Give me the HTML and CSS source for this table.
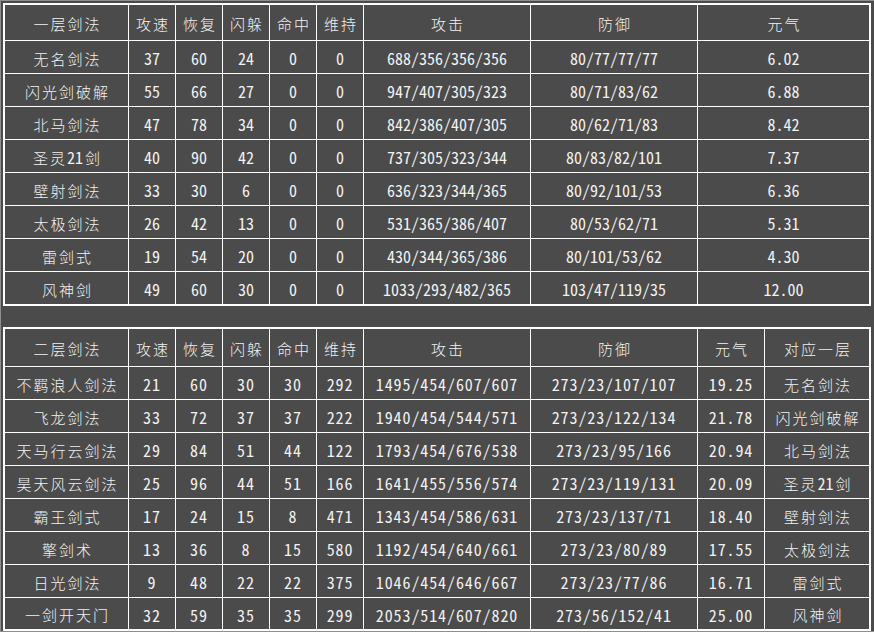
FILE: index.html
```html
<!DOCTYPE html>
<html lang="zh">
<head>
<meta charset="utf-8">
<link rel="stylesheet" href="styles.css">
</head>
<body>
<div class="frame">
  <div class="grid t1">
    <div class="cell h">一层剑法</div><div class="cell h">攻速</div><div class="cell h">恢复</div><div class="cell h">闪躲</div><div class="cell h">命中</div><div class="cell h">维持</div><div class="cell h">攻击</div><div class="cell h">防御</div><div class="cell h">元气</div>

    <div class="cell h">无名剑法</div><div class="cell n">37</div><div class="cell n">60</div><div class="cell n">24</div><div class="cell n">0</div><div class="cell n">0</div><div class="cell n">688/356/356/356</div><div class="cell n">80/77/77/77</div><div class="cell n">6.02</div>
    <div class="cell h">闪光剑破解</div><div class="cell n">55</div><div class="cell n">66</div><div class="cell n">27</div><div class="cell n">0</div><div class="cell n">0</div><div class="cell n">947/407/305/323</div><div class="cell n">80/71/83/62</div><div class="cell n">6.88</div>
    <div class="cell h">北马剑法</div><div class="cell n">47</div><div class="cell n">78</div><div class="cell n">34</div><div class="cell n">0</div><div class="cell n">0</div><div class="cell n">842/386/407/305</div><div class="cell n">80/62/71/83</div><div class="cell n">8.42</div>
    <div class="cell h">圣灵<span class="d">21</span>剑</div><div class="cell n">40</div><div class="cell n">90</div><div class="cell n">42</div><div class="cell n">0</div><div class="cell n">0</div><div class="cell n">737/305/323/344</div><div class="cell n">80/83/82/101</div><div class="cell n">7.37</div>
    <div class="cell h">壁射剑法</div><div class="cell n">33</div><div class="cell n">30</div><div class="cell n">6</div><div class="cell n">0</div><div class="cell n">0</div><div class="cell n">636/323/344/365</div><div class="cell n">80/92/101/53</div><div class="cell n">6.36</div>
    <div class="cell h">太极剑法</div><div class="cell n">26</div><div class="cell n">42</div><div class="cell n">13</div><div class="cell n">0</div><div class="cell n">0</div><div class="cell n">531/365/386/407</div><div class="cell n">80/53/62/71</div><div class="cell n">5.31</div>
    <div class="cell h">雷剑式</div><div class="cell n">19</div><div class="cell n">54</div><div class="cell n">20</div><div class="cell n">0</div><div class="cell n">0</div><div class="cell n">430/344/365/386</div><div class="cell n">80/101/53/62</div><div class="cell n">4.30</div>
    <div class="cell h">风神剑</div><div class="cell n">49</div><div class="cell n">60</div><div class="cell n">30</div><div class="cell n">0</div><div class="cell n">0</div><div class="cell n">1033/293/482/365</div><div class="cell n">103/47/119/35</div><div class="cell n">12.00</div>
  </div>

  <div class="grid t2">
    <div class="cell h">二层剑法</div><div class="cell h">攻速</div><div class="cell h">恢复</div><div class="cell h">闪躲</div><div class="cell h">命中</div><div class="cell h">维持</div><div class="cell h">攻击</div><div class="cell h">防御</div><div class="cell h">元气</div><div class="cell h">对应一层</div>

    <div class="cell h">不羁浪人剑法</div><div class="cell n">21</div><div class="cell n">60</div><div class="cell n">30</div><div class="cell n">30</div><div class="cell n">292</div><div class="cell n">1495/454/607/607</div><div class="cell n">273/23/107/107</div><div class="cell n">19.25</div><div class="cell h">无名剑法</div>
    <div class="cell h">飞龙剑法</div><div class="cell n">33</div><div class="cell n">72</div><div class="cell n">37</div><div class="cell n">37</div><div class="cell n">222</div><div class="cell n">1940/454/544/571</div><div class="cell n">273/23/122/134</div><div class="cell n">21.78</div><div class="cell h">闪光剑破解</div>
    <div class="cell h">天马行云剑法</div><div class="cell n">29</div><div class="cell n">84</div><div class="cell n">51</div><div class="cell n">44</div><div class="cell n">122</div><div class="cell n">1793/454/676/538</div><div class="cell n">273/23/95/166</div><div class="cell n">20.94</div><div class="cell h">北马剑法</div>
    <div class="cell h">昊天风云剑法</div><div class="cell n">25</div><div class="cell n">96</div><div class="cell n">44</div><div class="cell n">51</div><div class="cell n">166</div><div class="cell n">1641/455/556/574</div><div class="cell n">273/23/119/131</div><div class="cell n">20.09</div><div class="cell h">圣灵<span class="d">21</span>剑</div>
    <div class="cell h">霸王剑式</div><div class="cell n">17</div><div class="cell n">24</div><div class="cell n">15</div><div class="cell n">8</div><div class="cell n">471</div><div class="cell n">1343/454/586/631</div><div class="cell n">273/23/137/71</div><div class="cell n">18.40</div><div class="cell h">壁射剑法</div>
    <div class="cell h">擎剑术</div><div class="cell n">13</div><div class="cell n">36</div><div class="cell n">8</div><div class="cell n">15</div><div class="cell n">580</div><div class="cell n">1192/454/640/661</div><div class="cell n">273/23/80/89</div><div class="cell n">17.55</div><div class="cell h">太极剑法</div>
    <div class="cell h">日光剑法</div><div class="cell n">9</div><div class="cell n">48</div><div class="cell n">22</div><div class="cell n">22</div><div class="cell n">375</div><div class="cell n">1046/454/646/667</div><div class="cell n">273/23/77/86</div><div class="cell n">16.71</div><div class="cell h">雷剑式</div>
    <div class="cell h">一剑开天门</div><div class="cell n">32</div><div class="cell n">59</div><div class="cell n">35</div><div class="cell n">35</div><div class="cell n">299</div><div class="cell n">2053/514/607/820</div><div class="cell n">273/56/152/41</div><div class="cell n">25.00</div><div class="cell h">风神剑</div>
  </div>
</div>
</body>
</html>
```

FILE: styles.css
```css
html, body {
  margin: 0;
  padding: 0;
  background: #4b4b4b;
}
body {
  width: 874px;
  height: 632px;
  overflow: hidden;
}
.frame {
  box-sizing: border-box;
  width: 874px;
  height: 632px;
  border-top: 1px solid #8e8e8e;
  border-left: 1px solid #8e8e8e;
  border-bottom: 1px solid #8e8e8e;
  padding: 2px 2px 0 2px;
}
.grid {
  display: grid;
  width: 864px;
  border: 2px solid #ffffff;
  background: #ffffff;
  gap: 1px;
}
.t1 {
  grid-template-columns: 123px 46px 46px 46px 46px 46px 166px 166px 171px;
  grid-template-rows: 35px repeat(8, 32px);
}
.t2 {
  margin-top: 21px;
  grid-template-columns: 123px 46px 46px 46px 46px 46px 166px 166px 66px 104px;
  grid-template-rows: 37px repeat(7, 32px) 31px;
}
.cell {
  background: #4b4b4b;
  color: #f2f2f2;
  display: flex;
  align-items: center;
  justify-content: center;
  padding-top: 2px;
  box-sizing: border-box;
  white-space: nowrap;
}
.h {
  font-family: "Noto Sans CJK SC", sans-serif;
  font-weight: 300;
  font-size: 15px;
  letter-spacing: 2px;
  padding-left: 2px;
}
.d {
  font-family: "Noto Sans CJK SC", sans-serif;
  font-feature-settings: "hwid" 1;
  font-size: 16px;
  letter-spacing: 0;
  font-weight: normal;
  margin-right: 2px;
}
.n {
  font-family: "Noto Sans CJK SC", sans-serif;
  font-feature-settings: "hwid" 1;
  font-size: 16px;
  letter-spacing: 0;
}
.t2 .n {
  letter-spacing: 0.9px;
}
```
